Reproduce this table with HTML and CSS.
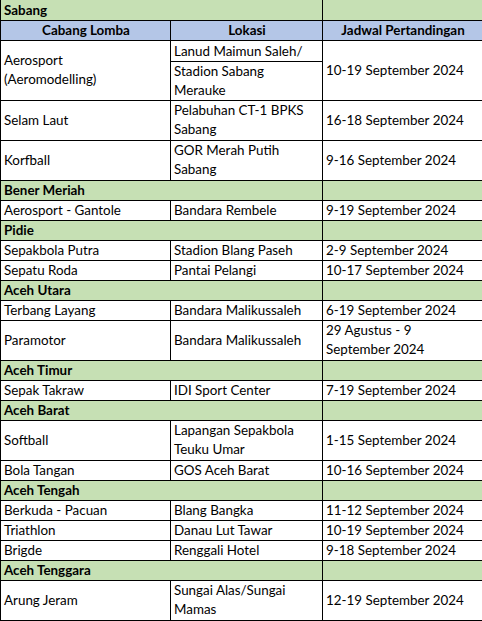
FILE: index.html
```html
<!DOCTYPE html>
<html lang="id">
<head>
<meta charset="utf-8">
<title>Jadwal Pertandingan</title>
<link rel="stylesheet" href="styles.css">
</head>
<body>
<table class="sched">
  <colgroup>
    <col class="c1">
    <col class="c2">
    <col class="c3">
  </colgroup>
  <tbody>
    <tr class="h1 region first"><td colspan="2">Sabang</td><td></td></tr>
    <tr class="h1 head"><th>Cabang Lomba</th><th>Lokasi</th><th>Jadwal Pertandingan</th></tr>
    <tr class="h1a"><td rowspan="2" class="two">Aerosport<br>(Aeromodelling)</td><td>Lanud Maimun Saleh/</td><td rowspan="2">10-19 September 2024</td></tr>
    <tr class="h2a"><td class="two">Stadion Sabang<br>Merauke</td></tr>
    <tr class="h2"><td>Selam Laut</td><td class="two">Pelabuhan CT-1 BPKS<br>Sabang</td><td>16-18 September 2024</td></tr>
    <tr class="h2"><td>Korfball</td><td class="two">GOR Merah Putih<br>Sabang</td><td>9-16 September 2024</td></tr>
    <tr class="h1 region"><td colspan="2">Bener Meriah</td><td></td></tr>
    <tr class="h1"><td>Aerosport - Gantole</td><td>Bandara Rembele</td><td>9-19 September 2024</td></tr>
    <tr class="h1 region"><td colspan="2">Pidie</td><td></td></tr>
    <tr class="h1"><td>Sepakbola Putra</td><td>Stadion Blang Paseh</td><td>2-9 September 2024</td></tr>
    <tr class="h1"><td>Sepatu Roda</td><td>Pantai Pelangi</td><td>10-17 September 2024</td></tr>
    <tr class="h1 region"><td colspan="2">Aceh Utara</td><td></td></tr>
    <tr class="h1"><td>Terbang Layang</td><td>Bandara Malikussaleh</td><td>6-19 September 2024</td></tr>
    <tr class="h2"><td>Paramotor</td><td>Bandara Malikussaleh</td><td class="two">29 Agustus - 9<br>September 2024</td></tr>
    <tr class="h1 region"><td colspan="2">Aceh Timur</td><td></td></tr>
    <tr class="h1"><td>Sepak Takraw</td><td>IDI Sport Center</td><td>7-19 September 2024</td></tr>
    <tr class="h1 region"><td colspan="2">Aceh Barat</td><td></td></tr>
    <tr class="h2"><td>Softball</td><td class="two">Lapangan Sepakbola<br>Teuku Umar</td><td>1-15 September 2024</td></tr>
    <tr class="h1"><td>Bola Tangan</td><td>GOS Aceh Barat</td><td>10-16 September 2024</td></tr>
    <tr class="h1 region"><td colspan="2">Aceh Tengah</td><td></td></tr>
    <tr class="h1"><td>Berkuda - Pacuan</td><td>Blang Bangka</td><td>11-12 September 2024</td></tr>
    <tr class="h1"><td>Triathlon</td><td>Danau Lut Tawar</td><td>10-19 September 2024</td></tr>
    <tr class="h1"><td>Brigde</td><td>Renggali Hotel</td><td>9-18 September 2024</td></tr>
    <tr class="h1 region"><td colspan="2">Aceh Tenggara</td><td></td></tr>
    <tr class="h2"><td>Arung Jeram</td><td class="two">Sungai Alas/Sungai<br>Mamas</td><td>12-19 September 2024</td></tr>
  </tbody>
</table>
</body>
</html>
```
FILE: styles.css
```css
html, body {
  margin: 0;
  padding: 0;
  background: #ffffff;
}

.sched {
  border-collapse: collapse;
  table-layout: fixed;
  width: 482px;
  font-family: Lato, "Open Sans", sans-serif;
  font-size: 13.4px;
  color: #000000;
}

.c1 { width: 170px; }
.c2 { width: 152px; }
.c3 { width: 160px; }

.sched td,
.sched th {
  border: 1px solid #000000;
  padding: 1px 2px 0 3px;
  line-height: 17px;
  vertical-align: middle;
  text-align: left;
  white-space: nowrap;
  overflow: hidden;
}

.sched td.two {
  line-height: 19px;
  padding-top: 0;
}

.h1 { height: 20px; }
.h1a { height: 21px; }
.h2a { height: 39px; }
.h2 { height: 40px; }

.first td {
  border-top: none;
}

.region td {
  background: #c6e0b4;
  font-weight: 700;
}

.head th {
  background: #b4c6e7;
  font-weight: 700;
  text-align: center;
}
```
